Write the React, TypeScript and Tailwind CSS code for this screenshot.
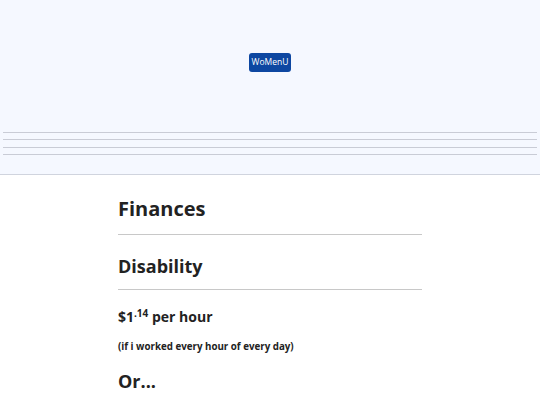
export default function App() {
  return (
    <div className="min-h-[405px] bg-white font-['Open_Sans',sans-serif] text-[#222]">
      {/* header */}
      <header className="h-[175px] bg-[#f5f8ff] border-b border-[#d0d4de] flex flex-col">
        <div className="flex justify-center pt-[53px]">
          <button className="h-[19px] px-[3px] rounded-[3px] bg-[#0d47a1] text-white text-[8.5px] leading-none">
            WoMenU
          </button>
        </div>
        <div className="mt-[60px] px-[3px] flex flex-col gap-[6.4px]">
          <hr className="border-[#c9ccd6]" />
          <hr className="border-[#c9ccd6]" />
          <hr className="border-[#c9ccd6]" />
          <hr className="border-[#c9ccd6]" />
        </div>
      </header>

      <main className="w-[304px] mx-auto pt-[20px]">
        <h1 className="text-[20px] leading-[28px] font-bold">Finances</h1>
        <hr className="mt-[11px] border-[#c8c8c8]" />
        <h2 className="mt-[19px] text-[18px] leading-[24px] font-bold">Disability</h2>
        <hr className="mt-[11px] border-[#c8c8c8]" />
        <p className="mt-[17px] text-[14px] leading-[20px] font-bold">
          $1<sup className="text-[10px]">.14</sup> per hour
        </p>
        <p className="mt-[13px] text-[9.75px] leading-[14px] font-bold">
          (if i worked every hour of every day)
        </p>
        <h2 className="mt-[15px] text-[18px] leading-[24px] font-bold">Or...</h2>
      </main>
    </div>
  );
}
